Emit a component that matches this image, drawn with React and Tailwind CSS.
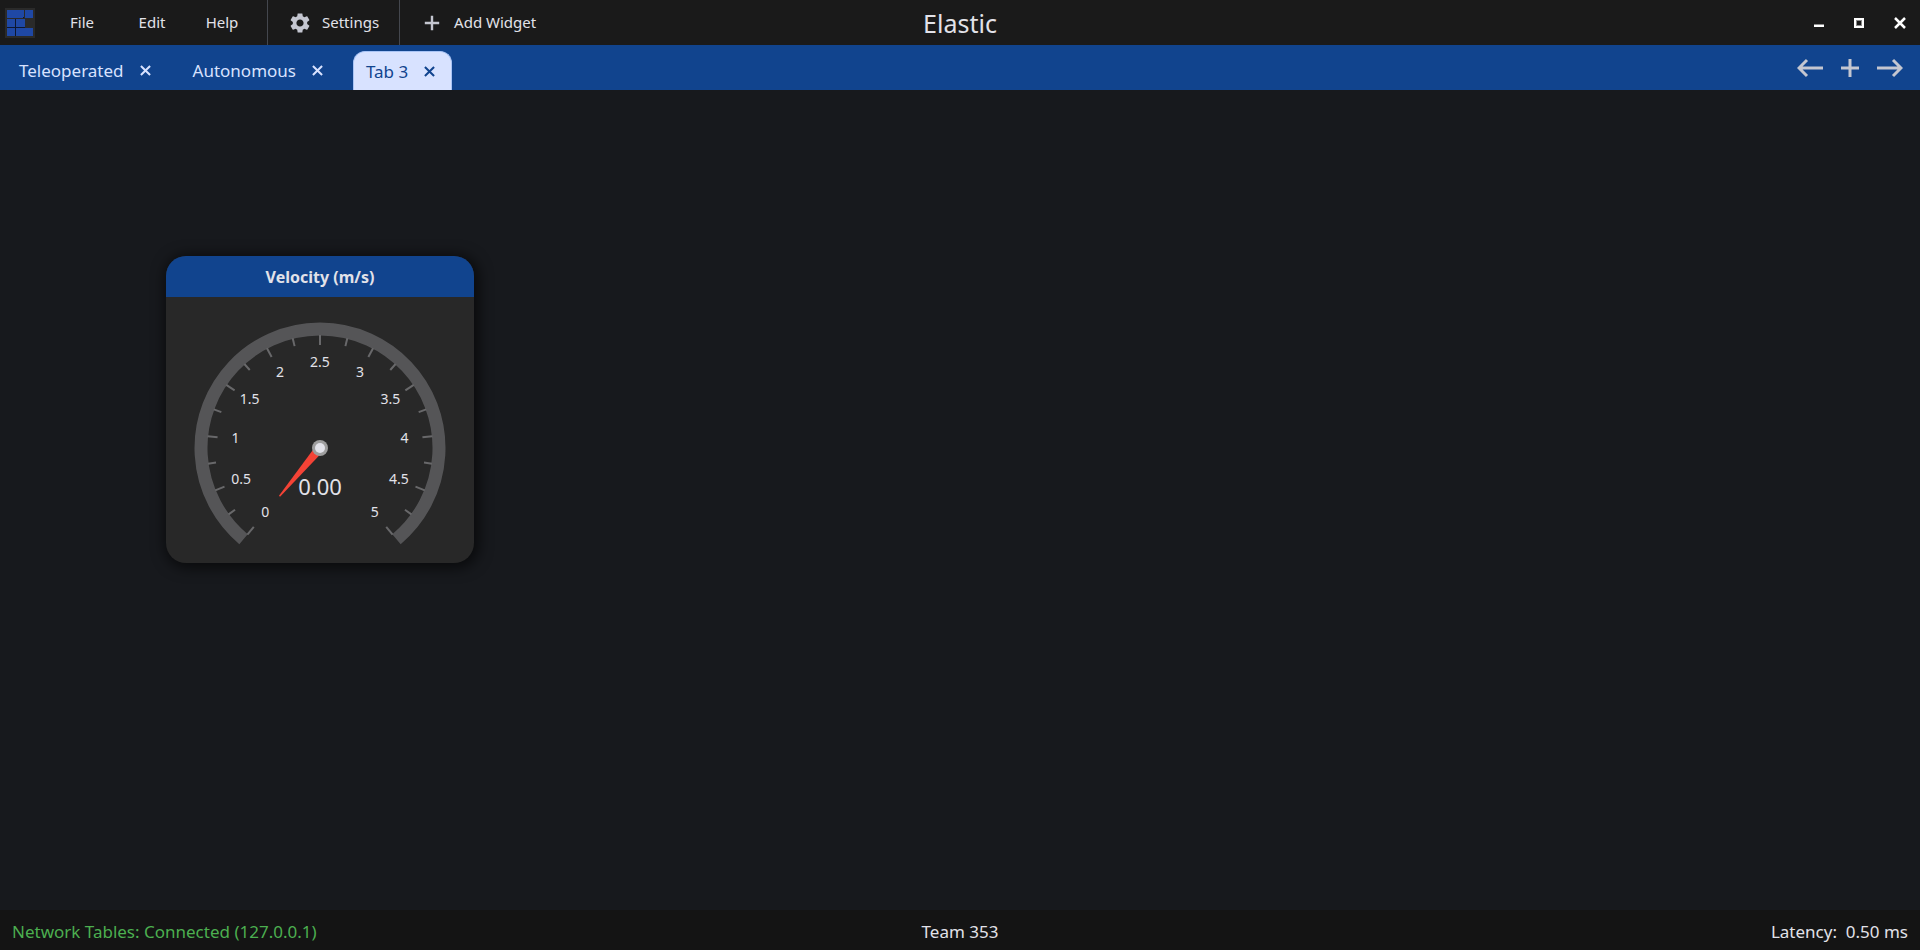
const GAUGE = { cx: 154, cy: 151, start: 130, sweep: 280, max: 5 };

function polar(radius, degrees) {
  const a = (degrees * Math.PI) / 180;
  return [GAUGE.cx + radius * Math.cos(a), GAUGE.cy + radius * Math.sin(a)];
}

function Logo() {
  return (
    <svg className="size-[30px]" viewBox="0 0 30 30" aria-hidden="true">
      <rect width="30" height="30" fill="#2a2a2a" />
      <g fill="#1f48a5">
        <rect x="2" y="2" width="17" height="8" />
        <rect x="20" y="2" width="8" height="8" />
        <rect x="2" y="11" width="8" height="8" />
        <rect x="11" y="11" width="9" height="8" />
        <rect x="2" y="20" width="8" height="8" />
        <rect x="11" y="20" width="17" height="8" />
      </g>
      <g fill="#0d1730">
        <rect x="10" y="11" width="1" height="17" />
        <rect x="18" y="9" width="1" height="1" />
        <rect x="2" y="19" width="18" height="1" />
      </g>
    </svg>
  );
}

function Gear() {
  return (
    <svg className="size-6" viewBox="0 0 24 24" fill="#c4c6d0" aria-hidden="true">
      <path d="M19.14 12.94c.04-.3.06-.61.06-.94 0-.32-.02-.64-.07-.94l2.03-1.58c.18-.14.23-.41.12-.61l-1.92-3.32c-.12-.22-.37-.29-.59-.22l-2.39.96c-.5-.38-1.03-.7-1.62-.94l-.36-2.54c-.04-.24-.24-.41-.48-.41h-3.84c-.24 0-.43.17-.47.41l-.36 2.54c-.59.24-1.13.57-1.62.94l-2.39-.96c-.22-.08-.47 0-.59.22L2.74 8.87c-.12.21-.08.47.12.61l2.03 1.58c-.05.3-.09.63-.09.94s.02.64.07.94l-2.03 1.58c-.18.14-.23.41-.12.61l1.92 3.32c.12.22.37.29.59.22l2.39-.96c.5.38 1.03.7 1.62.94l.36 2.54c.05.24.24.41.48.41h3.84c.24 0 .44-.17.47-.41l.36-2.54c.59-.24 1.13-.56 1.62-.94l2.39.96c.22.08.47 0 .59-.22l1.92-3.32c.12-.22.07-.47-.12-.61l-2.01-1.58zM12 15.6c-1.98 0-3.6-1.62-3.6-3.6s1.62-3.6 3.6-3.6 3.6 1.62 3.6 3.6-1.62 3.6-3.6 3.6z" />
    </svg>
  );
}

function Plus({ className }) {
  return (
    <svg className={className} viewBox="0 0 20 20" fill="none" stroke="#c4c6d0" strokeWidth="3" aria-hidden="true">
      <path d="M10 1v18M1 10h18" />
    </svg>
  );
}

function Cross({ className }) {
  return (
    <svg className={className} viewBox="0 0 12 12" fill="none" stroke="currentColor" strokeWidth="2.2" aria-hidden="true">
      <path d="M1 1l10 10M11 1L1 11" />
    </svg>
  );
}

function Arrow({ flip }) {
  return (
    <svg className="h-5 w-[26px]" viewBox="0 0 26 20" fill="none" stroke="#c4c6d0" strokeWidth="3" aria-hidden="true">
      <path d={flip ? "M0 10h24M16 2l8 8-8 8" : "M26 10H2M10 2L2 10l8 8"} />
    </svg>
  );
}

function Tab({ label, active }) {
  return (
    <div
      className={
        active
          ? "flex h-[39px] items-center gap-3 rounded-t-xl border border-b-0 border-[#a9c4f5] bg-[#d8e2ff] px-3 text-[#11448e]"
          : "flex h-[39px] items-center gap-3 px-3 text-[#d8e2ff]"
      }
    >
      <button type="button" className="pt-px text-[17px] leading-6">
        {label}
      </button>
      <button type="button" aria-label={"Close " + label} className="p-1">
        <Cross className="size-[11px]" />
      </button>
    </div>
  );
}

function Gauge() {
  const ticks = Array.from({ length: 21 }, (_, i) => i);
  const labels = Array.from({ length: 11 }, (_, i) => i / 2);
  const [ox1, oy1] = polar(119, 130);
  const [ox2, oy2] = polar(119, 410);
  return (
    <svg className="block h-auto w-full" viewBox="0 0 308 266" role="img" aria-label="Velocity gauge">
      <path d={`M${ox1} ${oy1}A119 119 0 1 1 ${ox2} ${oy2}`} fill="none" stroke="#555557" strokeWidth="13" />
      <g stroke="#68686a" strokeWidth="2">
        {ticks.map((i) => {
          const angle = GAUGE.start + i * 14;
          const [x1, y1] = polar(113, angle);
          const [x2, y2] = polar(i % 2 ? 105 : 103, angle);
          return <line key={i} x1={x1} y1={y1} x2={x2} y2={y2} />;
        })}
      </g>
      <g fill="#e2e2e9" fontSize="14" textAnchor="middle">
        {labels.map((v) => {
          const [x, y] = polar(85, GAUGE.start + (v / GAUGE.max) * GAUGE.sweep);
          return (
            <text key={v} x={x} y={y + 4}>
              {v}
            </text>
          );
        })}
      </g>
      <path d="M-4.5 0L-.7 63H.7L4.5 0z" fill="#f44336" transform={`translate(${GAUGE.cx} ${GAUGE.cy}) rotate(40)`} />
      <circle cx={GAUGE.cx} cy={GAUGE.cy} r="8" fill="#9e9e9e" />
      <circle cx={GAUGE.cx} cy={GAUGE.cy} r="5" fill="#e2e2e9" />
      <text x={GAUGE.cx} y="198" fill="#e2e2e9" fontSize="22" textAnchor="middle">
        0.00
      </text>
    </svg>
  );
}

export default function App() {
  return (
    <div className="flex h-screen flex-col bg-[#17191d] font-['Noto_Sans','Open_Sans',sans-serif] text-[#e2e2e9]">
      <header className="grid h-[45px] shrink-0 grid-cols-[1fr_auto_1fr] items-center bg-[#1a1a1a]">
        <div className="flex h-full items-center text-[15px]">
          <div className="pr-3 pl-[5px]">
            <Logo />
          </div>
          <nav className="flex h-full items-center pr-[10px]">
            <button type="button" className="w-[70px]">File</button>
            <button type="button" className="w-[70px]">Edit</button>
            <button type="button" className="w-[70px]">Help</button>
          </nav>
          <button type="button" className="flex h-full items-center gap-[10px] border-x border-[#44474e] px-5">
            <Gear />
            Settings
          </button>
          <button type="button" className="flex h-full items-center gap-[14px] px-6">
            <Plus className="size-4" />
            Add Widget
          </button>
        </div>
        <h1 className="text-[25px] leading-8">Elastic</h1>
        <div className="flex items-center justify-end gap-[30px] pr-[14px] text-white">
          <button type="button" aria-label="Minimize" className="pt-[6px]">
            <svg className="h-[3px] w-[10px]" viewBox="0 0 10 3" aria-hidden="true">
              <rect width="10" height="1" fill="#8d8d8d" />
              <rect y="1" width="10" height="2" fill="#fff" />
            </svg>
          </button>
          <button type="button" aria-label="Maximize">
            <svg className="size-[10px]" viewBox="0 0 10 10" fill="none" aria-hidden="true">
              <rect x="2.5" y="2.5" width="5" height="5" stroke="#8d8d8d" />
              <rect x="1" y="1" width="8" height="8" stroke="#fff" strokeWidth="2" />
            </svg>
          </button>
          <button type="button" aria-label="Close window">
            <svg className="size-3" viewBox="0 0 12 12" stroke="#fff" strokeWidth="2.5" aria-hidden="true">
              <path d="M1 1l10 10M11 1L1 11" />
            </svg>
          </button>
        </div>
      </header>

      <div className="flex h-[45px] shrink-0 items-center justify-between bg-[#11448e] pr-[17px] pl-[7px]">
        <div className="flex gap-[14px] self-end">
          <Tab label="Teleoperated" />
          <Tab label="Autonomous" />
          <Tab label="Tab 3" active />
        </div>
        <div className="flex items-center gap-[17px]">
          <button type="button" aria-label="Move tab left"><Arrow /></button>
          <button type="button" aria-label="Add tab"><Plus className="size-5" /></button>
          <button type="button" aria-label="Move tab right"><Arrow flip /></button>
        </div>
      </div>

      <main className="relative grow">
        <section className="absolute top-[166px] left-[166px] w-[308px] overflow-hidden rounded-[20px] bg-[#282828] shadow-[2px_2px_14px_3px_rgba(0,0,0,0.6)]">
          <h2 className="bg-[#11448e] pt-[9px] pb-[7px] text-center text-base leading-[25px] font-bold">Velocity (m/s)</h2>
          <Gauge />
        </section>
      </main>

      <footer className="grid h-10 shrink-0 grid-cols-3 items-center bg-[#141414] px-3 pt-1 text-[17px]">
        <span className="text-[#4caf50]">Network Tables: Connected (127.0.0.1)</span>
        <span className="text-center">Team 353</span>
        <span className="text-right whitespace-pre">Latency:  0.50 ms</span>
      </footer>
    </div>
  );
}
